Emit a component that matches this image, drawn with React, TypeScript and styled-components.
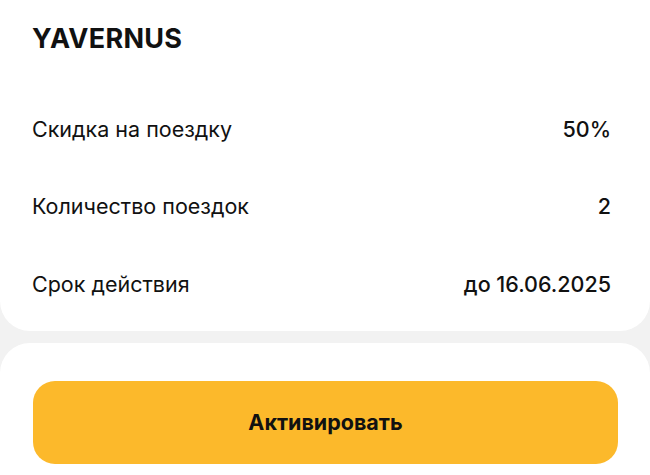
import { FC } from "react";
import styled, { createGlobalStyle } from "styled-components";

const GlobalStyle = createGlobalStyle`
  html, body {
    margin: 0;
    padding: 0;
    background: #f2f2f2;
    font-family: Inter, "Noto Sans", sans-serif;
    color: #111;
  }
`;

const Page = styled.div`
  display: flex;
  flex-direction: column;
  gap: 12px;
  min-height: 475px;
`;

const InfoCard = styled.section`
  background: #fff;
  border-radius: 0 0 30px 30px;
  padding: 22px 39px 8px 32px;
`;

const Title = styled.h1`
  margin: 0 0 34px;
  font-size: 27px;
  line-height: 34px;
  font-weight: 700;
  letter-spacing: 0.3px;
`;

const Row = styled.div`
  display: flex;
  align-items: center;
  justify-content: space-between;
  height: 77.5px;
  font-size: 21.5px;
`;

const Label = styled.span`
  font-weight: 400;
`;

const Value = styled.span`
  font-weight: 500;
`;

const ActionCard = styled.section`
  flex: 1;
  background: #fff;
  border-radius: 30px 30px 0 0;
  padding: 38px 32px 0 33px;
`;

const ActivateButton = styled.button`
  display: block;
  width: 100%;
  height: 83px;
  border: none;
  border-radius: 22px;
  background: #fcb92b;
  color: #111;
  font-family: inherit;
  font-size: 21.5px;
  font-weight: 700;
  cursor: pointer;
`;

const rows = [
  { label: "Скидка на поездку", value: "50%" },
  { label: "Количество поездок", value: "2" },
  { label: "Срок действия", value: "до 16.06.2025" },
];

const App: FC = () => {
  return (
    <>
      <GlobalStyle />
      <Page>
        <InfoCard>
          <Title>YAVERNUS</Title>
          {rows.map((row) => (
            <Row key={row.label}>
              <Label>{row.label}</Label>
              <Value>{row.value}</Value>
            </Row>
          ))}
        </InfoCard>
        <ActionCard>
          <ActivateButton>Активировать</ActivateButton>
        </ActionCard>
      </Page>
    </>
  );
};

export default App;
